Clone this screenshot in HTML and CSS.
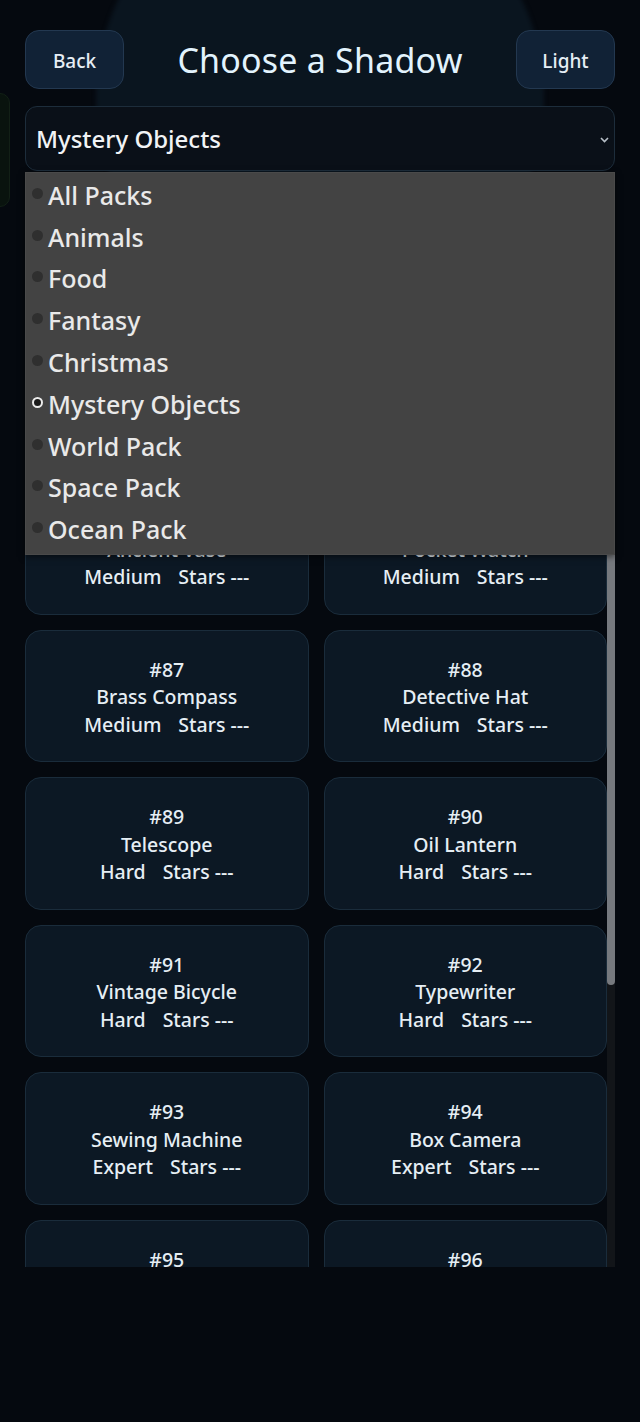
FILE: index.html
```html
<!DOCTYPE html>
<html lang="en">
<head>
<meta charset="utf-8">
<title>Choose a Shadow</title>
<link rel="stylesheet" href="styles.css">
</head>
<body>
<div class="glow"></div>
<div class="side-tab"></div>
<div class="app">
  <header class="header">
    <button class="btn">Back</button>
    <h1 class="title">Choose a Shadow</h1>
    <button class="btn">Light</button>
  </header>

  <div class="select-wrap">
    <div class="select">
      <span class="select-value">Mystery Objects</span>
      <svg class="chevron" width="9" height="6" viewBox="0 0 9 6"><path d="M1 1l3.5 3.5L8 1" fill="none" stroke="#b8c0c8" stroke-width="1.6"/></svg>
    </div>
    <ul class="dropdown">
      <li class="opt"><span class="dot"></span>All Packs</li>
      <li class="opt"><span class="dot"></span>Animals</li>
      <li class="opt"><span class="dot"></span>Food</li>
      <li class="opt"><span class="dot"></span>Fantasy</li>
      <li class="opt"><span class="dot"></span>Christmas</li>
      <li class="opt"><span class="dot dot-on"></span>Mystery Objects</li>
      <li class="opt"><span class="dot"></span>World Pack</li>
      <li class="opt"><span class="dot"></span>Space Pack</li>
      <li class="opt"><span class="dot"></span>Ocean Pack</li>
    </ul>
  </div>

  <div class="list">
    <div class="grid">
      <div class="card"><div>#81</div><div>Antique Key</div><div class="meta"><span>Medium</span><span>Stars ---</span></div></div>
      <div class="card"><div>#82</div><div>Old Map</div><div class="meta"><span>Medium</span><span>Stars ---</span></div></div>
      <div class="card"><div>#83</div><div>Candlestick</div><div class="meta"><span>Medium</span><span>Stars ---</span></div></div>
      <div class="card"><div>#84</div><div>Magnifying Glass</div><div class="meta"><span>Medium</span><span>Stars ---</span></div></div>
      <div class="card"><div>#85</div><div>Ancient Vase</div><div class="meta"><span>Medium</span><span>Stars ---</span></div></div>
      <div class="card"><div>#86</div><div>Pocket Watch</div><div class="meta"><span>Medium</span><span>Stars ---</span></div></div>
      <div class="card"><div>#87</div><div>Brass Compass</div><div class="meta"><span>Medium</span><span>Stars ---</span></div></div>
      <div class="card"><div>#88</div><div>Detective Hat</div><div class="meta"><span>Medium</span><span>Stars ---</span></div></div>
      <div class="card"><div>#89</div><div>Telescope</div><div class="meta"><span>Hard</span><span>Stars ---</span></div></div>
      <div class="card"><div>#90</div><div>Oil Lantern</div><div class="meta"><span>Hard</span><span>Stars ---</span></div></div>
      <div class="card"><div>#91</div><div>Vintage Bicycle</div><div class="meta"><span>Hard</span><span>Stars ---</span></div></div>
      <div class="card"><div>#92</div><div>Typewriter</div><div class="meta"><span>Hard</span><span>Stars ---</span></div></div>
      <div class="card"><div>#93</div><div>Sewing Machine</div><div class="meta"><span>Expert</span><span>Stars ---</span></div></div>
      <div class="card"><div>#94</div><div>Box Camera</div><div class="meta"><span>Expert</span><span>Stars ---</span></div></div>
      <div class="card"><div>#95</div><div>Gramophone</div><div class="meta"><span>Expert</span><span>Stars ---</span></div></div>
      <div class="card"><div>#96</div><div>Hourglass</div><div class="meta"><span>Expert</span><span>Stars ---</span></div></div>
    </div>
    <div class="scrollbar"><div class="thumb"></div></div>
  </div>
</div>
</body>
</html>
```

FILE: styles.css
```css
* { box-sizing: border-box; }
html, body {
  margin: 0;
  padding: 0;
  background: #05090f;
}
body {
  font-family: "Noto Sans", "Open Sans", sans-serif;
  color: #e6eef4;
  position: relative;
  min-height: 1422px;
  overflow: hidden;
}
.glow {
  position: absolute;
  left: 96px;
  top: -127px;
  width: 448px;
  height: 448px;
  border-radius: 50%;
  background: #0a151f;
  filter: blur(2px);
  z-index: 0;
}
.side-tab {
  position: absolute;
  left: -20px;
  top: 93px;
  width: 30px;
  height: 114px;
  border-radius: 10px;
  background: #09130e;
  border: 1px solid #122016;
  z-index: 0;
}
.app {
  position: relative;
  z-index: 1;
  padding: 30px 25px 0 25px;
}
.header {
  display: flex;
  align-items: center;
  justify-content: space-between;
  height: 59px;
}
.btn {
  width: 99px;
  height: 59px;
  border-radius: 14px;
  background: #112236;
  border: 1px solid #233850;
  color: #e6eef5;
  font-family: inherit;
  font-size: 19px;
  font-weight: 500;
  padding: 2px 0 0 0;
}
.title {
  margin: 0;
  font-size: 34px;
  font-weight: 400;
  color: #e2f3fd;
  letter-spacing: 0.2px;
}
.select-wrap {
  position: relative;
  margin-top: 17px;
}
.select {
  height: 65px;
  border-radius: 12px;
  background: #0a1018;
  border: 1px solid #1d2d3b;
  display: flex;
  align-items: center;
  justify-content: space-between;
  padding: 0 5px 0 10px;
}
.select-value {
  font-size: 24px;
  font-weight: 500;
  color: #f1f3f5;
}
.chevron { margin-top: 2px; }
.dropdown {
  position: absolute;
  left: 0;
  right: 0;
  top: 66px;
  margin: 0;
  padding: 1px 0 4px 0;
  list-style: none;
  background: #434343;
  border: 1px solid #4a4a4a;
  box-shadow: 0 2px 6px rgba(0,0,0,0.5);
  z-index: 5;
}
.opt {
  height: 41.8px;
  display: flex;
  align-items: center;
  padding-left: 6px;
  font-size: 25px;
  font-weight: 500;
  color: #e9e9e9;
}
.dot {
  width: 11px;
  height: 11px;
  border-radius: 50%;
  background: #2f2f2f;
  margin-right: 5px;
  margin-top: -3px;
  flex: none;
}
.dot-on {
  background: #1b1b1b;
  border: 2px solid #ececec;
}
.list {
  margin-top: 16px;
  height: 1080px;
  overflow: hidden;
  display: flex;
}
.grid {
  width: 582px;
  display: grid;
  grid-template-columns: 1fr 1fr;
  gap: 15px;
  align-content: start;
}
.card {
  height: 132.5px;
  border-radius: 16px;
  background: #0c1824;
  border: 1px solid #1a2c3b;
  padding: 25px 4px 23px 4px;
  text-align: center;
  font-size: 19.5px;
  font-weight: 500;
  line-height: 27.5px;
  color: #e6eef4;
}
.meta {
  display: flex;
  justify-content: center;
  gap: 17px;
}
.scrollbar {
  width: 8px;
  background: #121519;
  margin-left: 0;
}
.thumb {
  height: 798px;
  background: #76797e;
  border-radius: 0 0 4px 4px;
}
```
